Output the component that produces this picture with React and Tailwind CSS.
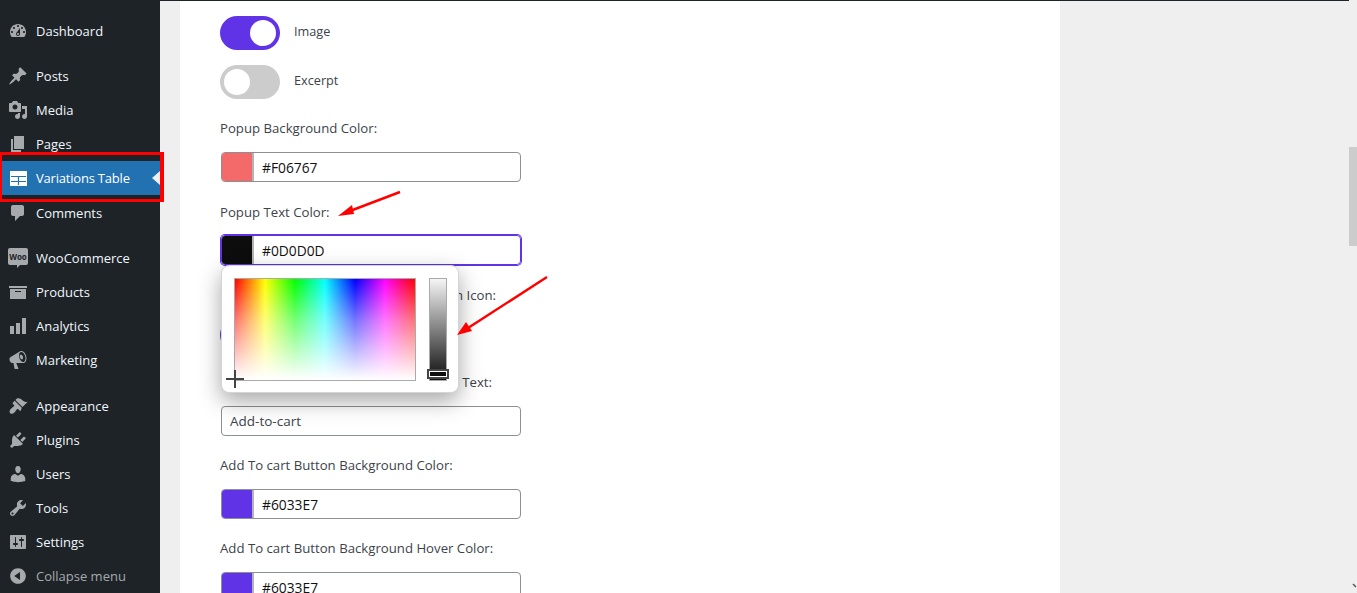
const icons = {
  dashboard:
    "M3.76 16h12.48c1.1-1.37 1.76-3.11 1.76-5 0-4.42-3.58-8-8-8s-8 3.58-8 8c0 1.89.66 3.63 1.76 5zM10 4c.55 0 1 .45 1 1s-.45 1-1 1-1-.45-1-1 .45-1 1-1zM6 6c.55 0 1 .45 1 1s-.45 1-1 1-1-.45-1-1 .45-1 1-1zm8 0c.55 0 1 .45 1 1s-.45 1-1 1-1-.45-1-1 .45-1 1-1zm-5.37 5.55L12 7v6c0 1.1-.9 2-2 2s-2-.9-2-2c0-.57.24-1.08.63-1.45zM4 10c.55 0 1 .45 1 1s-.45 1-1 1-1-.45-1-1 .45-1 1-1zm12 0c.55 0 1 .45 1 1s-.45 1-1 1-1-.45-1-1 .45-1 1-1zm-5 3c0-.55-.45-1-1-1s-1 .45-1 1 .45 1 1 1 1-.45 1-1z",
  post: "M10.44 3.02l1.82-1.82 6.36 6.35-1.83 1.82c-1.05-.68-2.48-.57-3.41.36l-.75.75c-.92.93-1.04 2.35-.35 3.41l-1.83 1.82-2.41-2.41-2.8 2.79c-.42.42-3.38 2.71-3.8 2.29s1.86-3.39 2.28-3.81l2.79-2.79L4.1 9.36l1.83-1.82c1.05.69 2.48.57 3.4-.36l.75-.75c.93-.92 1.05-2.35.36-3.41z",
  media:
    "M13 11V4c0-.55-.45-1-1-1h-1.67L9 1H5L3.67 3H2c-.55 0-1 .45-1 1v7c0 .55.45 1 1 1h10c.55 0 1-.45 1-1zM7 4.5c1.38 0 2.5 1.12 2.5 2.5S8.38 9.5 7 9.5 4.5 8.38 4.5 7 5.62 4.5 7 4.5zM14 6h5v10.5c0 1.38-1.12 2.5-2.5 2.5S14 17.88 14 16.5s1.12-2.5 2.5-2.5c.17 0 .34.02.5.05V9h-3V6zm-4 8.05V13h2v3.5c0 1.38-1.12 2.5-2.5 2.5S7 17.88 7 16.5 8.12 14 9.5 14c.17 0 .34.02.5.05z",
  page: "M6 15V2h10v13H6zm-1 1h8v2H3V5h2v11z",
  comments:
    "M5 2h9c1.1 0 2 .9 2 2v7c0 1.1-.9 2-2 2h-2l-5 5v-5H5c-1.1 0-2-.9-2-2V4c0-1.1.9-2 2-2z",
  archive: "M19 4v2H1V4h18zM2 7h16v10H2V7zm11 3V9H7v1h6z",
  chart: "M18 18V2h-4v16h4zm-6 0V7H8v11h4zm-6 0v-8H2v8h4z",
  megaphone:
    "M18.15 5.94c.46 1.62.38 3.22-.02 4.48-.42 1.28-1.26 2.18-2.3 2.48-.16.06-.26.06-.4.06-.06.02-.12.02-.18.02-.06.02-.14.02-.22.02h-6.8l2.22 5.5c.02.14-.06.26-.14.34-.08.1-.24.16-.34.16H6.95c-.1 0-.26-.06-.34-.16-.08-.08-.16-.2-.14-.34l-1-5.5H4.25l-.02-.02c-.5.06-1.08-.18-1.54-.62s-.88-1.08-1.06-1.88c-.24-.8-.2-1.56-.02-2.2.18-.62.58-1.08 1.06-1.3l.02-.02 9-5.4c.1-.06.18-.1.24-.16.06-.04.14-.08.24-.12.16-.08.28-.12.5-.18 1.04-.3 2.24.1 3.22 1 .98.88 1.8 2.24 2.26 3.86zm-2.58 5.98h-.02c.4-.1.74-.34 1.04-.7.58-.7.86-1.76.86-3.04 0-.64-.1-1.3-.28-1.98-.34-1.36-1.02-2.5-1.78-3.24s-1.68-1.1-2.46-.88c-.82.22-1.4.96-1.7 2-.32 1.04-.28 2.36.06 3.72.38 1.36 1 2.5 1.8 3.24.78.74 1.62 1.1 2.48.88zm-2.54-7.08c.22-.04.42-.02.62.04.38.16.76.48 1.02 1s.42 1.2.42 1.78c0 .3-.04.56-.12.8-.18.48-.44.84-.86.94-.34.1-.8-.06-1.14-.4-.38-.34-.74-.84-.94-1.46-.22-.66-.3-1.3-.24-1.82.08-.44.28-.74.74-.88z",
  appearance:
    "M14.48 11.06L7.41 3.99l1.5-1.5c.5-.56 2.3-.47 3.51.32 1.21.8 1.43 1.28 2.91 2.1 1.18.64 2.45 1.26 4.45.85zm-.71.71L6.7 4.7 4.93 6.47c-.39.39-.39 1.02 0 1.41l1.06 1.06c.39.39.39 1.03 0 1.42-.6.6-1.43 1.11-2.21 1.69-.35.26-.7.53-1.01.84-1.34 1.34-1.6 3.2-.57 4.24 1.04 1.03 2.9.77 4.24-.57.31-.31.58-.66.84-1.01.58-.78 1.09-1.61 1.69-2.21.39-.39 1.02-.39 1.41 0l1.06 1.06c.39.39 1.02.39 1.41 0z",
  plugins:
    "M13.11 4.36L9.87 7.6 8 5.73l3.24-3.24c.35-.34 1.05-.2 1.56.32.52.51.66 1.21.31 1.55zm-8 1.77l.91-1.12 9.01 9.01-1.19.84c-.71.71-2.63 1.16-3.82 1.16H6.14L4.9 17.26c-.59.59-1.54.59-2.12 0-.59-.58-.59-1.53 0-2.12l1.24-1.24v-3.88c0-1.13.4-3.19 1.09-3.89zm7.26 3.97l3.24-3.24c.34-.35 1.04-.21 1.55.31.52.51.66 1.21.31 1.55l-3.24 3.25z",
  users:
    "M10 9.25c-2.27 0-2.73-3.44-2.73-3.44C7 4.02 7.82 2 9.97 2c2.16 0 2.98 2.02 2.71 3.81 0 0-.41 3.44-2.68 3.44zm0 2.57L12.72 10c2.39 0 4.52 2.33 4.52 4.53v2.49s-3.65 1.13-7.24 1.13c-3.65 0-7.24-1.13-7.24-1.13v-2.49c0-2.25 1.94-4.53 4.47-4.53z",
  tools:
    "M16.68 9.77c-1.34 1.34-3.3 1.67-4.95.99l-5.41 6.52c-.99.99-2.59.99-3.58 0s-.99-2.59 0-3.57l6.52-5.42c-.68-1.65-.35-3.61.99-4.95 1.28-1.28 3.12-1.62 4.72-1.06l-2.89 2.89 2.82 2.82 2.86-2.87c.53 1.58.18 3.39-1.08 4.65zM3.81 16.21c.4.39 1.04.39 1.43 0 .4-.4.4-1.04 0-1.43-.39-.4-1.03-.4-1.43 0-.39.39-.39 1.03 0 1.43z",
  settings:
    "M18 16V4c0-.55-.45-1-1-1H3c-.55 0-1 .45-1 1v12c0 .55.45 1 1 1h14c.55 0 1-.45 1-1zM8 11h1c.55 0 1 .45 1 1s-.45 1-1 1H8v1.5c0 .28-.22.5-.5.5s-.5-.22-.5-.5V13H6c-.55 0-1-.45-1-1s.45-1 1-1h1V5.5c0-.28.22-.5.5-.5s.5.22.5.5V11zm5-2h-1c-.55 0-1-.45-1-1s.45-1 1-1h1V5.5c0-.28.22-.5.5-.5s.5.22.5.5V7h1c.55 0 1 .45 1 1s-.45 1-1 1h-1v5.5c0 .28-.22.5-.5.5s-.5-.22-.5-.5V9z",
  collapse:
    "M10 2.16c4.33 0 7.84 3.51 7.84 7.84s-3.51 7.84-7.84 7.84S2.16 14.33 2.16 10 5.71 2.16 10 2.16zm2 11.72V6.12L6.18 9.97z",
};

function Dashicon({ name }) {
  return (
    <svg viewBox="0 0 20 20" className="h-[20px] w-[20px] fill-[#a7aaad]">
      <path d={icons[name]} />
    </svg>
  );
}

function WooIcon() {
  return (
    <span className="relative mb-[3px] flex h-[17px] w-[20px] items-center justify-center rounded-[2px] bg-[#a7aaad]">
      <span className="text-[8px] leading-none font-bold text-[#1d2327]">Woo</span>
      <span className="absolute top-[16px] left-[9px] h-0 w-0 border-t-[4px] border-r-[4px] border-t-[#a7aaad] border-r-transparent"></span>
    </span>
  );
}

function TableIcon() {
  return (
    <svg viewBox="0 0 17 15" className="h-[15px] w-[17px]">
      <rect width="17" height="15" fill="#ffffff" />
      <path d="M1 5.5h15M1 10.5h15M8.5 5.5v8.5" stroke="#2271b1" strokeWidth="1.2" fill="none" />
    </svg>
  );
}

function MenuItem({ icon, label, className = "" }) {
  return (
    <div className={`flex h-[34px] items-center ${className}`}>
      <span className="flex w-[36px] shrink-0 justify-center">
        {icon === "woo" ? <WooIcon /> : <Dashicon name={icon} />}
      </span>
      <span className="pt-[2px] text-[13px] text-[#f0f6fc]">{label}</span>
    </div>
  );
}

function Sidebar() {
  return (
    <aside className="h-full w-[160px] shrink-0 bg-[#1d2327] pt-[14px]">
      <MenuItem icon="dashboard" label="Dashboard" />
      <MenuItem icon="post" label="Posts" className="mt-[11px]" />
      <MenuItem icon="media" label="Media" />
      <MenuItem icon="page" label="Pages" />
      <div className="relative flex h-[34px] items-center bg-[#2271b1]">
        <span className="flex w-[36px] shrink-0 justify-center">
          <TableIcon />
        </span>
        <span className="pt-[2px] text-[13px] tracking-[-0.2px] text-white">Variations Table</span>
        <span className="absolute top-[10px] right-0 h-0 w-0 border-y-[7px] border-r-[8px] border-y-transparent border-r-[#f0f0f0]"></span>
      </div>
      <MenuItem icon="comments" label="Comments" className="mt-[1px]" />
      <MenuItem icon="woo" label="WooCommerce" className="mt-[11px]" />
      <MenuItem icon="archive" label="Products" />
      <MenuItem icon="chart" label="Analytics" />
      <MenuItem icon="megaphone" label="Marketing" />
      <MenuItem icon="appearance" label="Appearance" className="mt-[12px]" />
      <MenuItem icon="plugins" label="Plugins" />
      <MenuItem icon="users" label="Users" />
      <MenuItem icon="tools" label="Tools" />
      <MenuItem icon="settings" label="Settings" />
      <div className="flex h-[34px] items-center">
        <span className="flex w-[36px] shrink-0 justify-center">
          <Dashicon name="collapse" />
        </span>
        <span className="pt-[2px] text-[13px] text-[#a7aaad]">Collapse menu</span>
      </div>
    </aside>
  );
}

function Toggle({ on, label, className = "" }) {
  return (
    <div className={`flex h-[34px] items-center gap-[14px] ${className}`}>
      <span
        className={`flex h-[34px] w-[60px] items-center rounded-full px-[4px] ${
          on ? "justify-end bg-[#6033e7]" : "justify-start bg-[#cccccc]"
        }`}
      >
        <span className="h-[26px] w-[26px] rounded-full bg-white"></span>
      </span>
      <span className="pb-[2px] text-[12.7px] text-[#3c434a]">{label}</span>
    </div>
  );
}

function FieldLabel({ children, className = "" }) {
  return <div className={`h-[20px] text-[13.2px] leading-[20px] text-[#3c434a] ${className}`}>{children}</div>;
}

function ColorField({ color, value, focused }) {
  return (
    <div
      className={`ml-[1px] flex h-[30px] w-[300px] overflow-hidden rounded-[4px] border ${
        focused ? "border-[#6033e7] shadow-[0_0_0_1px_#6033e7]" : "border-[#8c8f94]"
      }`}
    >
      <span className={`h-full w-[30px] ${color}`}></span>
      <span className="w-[2px] bg-[#b4b4b4]"></span>
      <span className="pt-[1px] pl-[8px] text-[13.8px] leading-[28px] text-[#111111]">{value}</span>
    </div>
  );
}

function ColorPicker() {
  return (
    <div className="absolute top-[264px] left-[41px] z-10 flex h-[128px] w-[238px] gap-[13px] rounded-[8px] border border-[#d4d4d4] bg-white pt-[12px] pl-[12px] shadow-[0_8px_22px_rgba(0,0,0,0.35)]">
      <div className="relative h-[103px] w-[182px] border border-[#aaaaaa] bg-[linear-gradient(to_bottom,transparent,rgba(255,255,255,0.45)_40%,white),linear-gradient(to_right,#ff0000,#ffff00,#00ff00,#00ffff,#0000ff,#ff00ff,#ff0000)]">
        <span className="absolute top-[99px] left-[-9px] h-[2px] w-[18px] bg-[#444444]"></span>
        <span className="absolute top-[91px] left-[-1px] h-[18px] w-[2px] bg-[#444444]"></span>
      </div>
      <div className="relative h-[103px] w-[18px] border border-[#aaaaaa] bg-[linear-gradient(to_bottom,#f5f5f5,#0d0d0d)]">
        <span className="absolute top-[90px] left-[-3px] flex h-[10px] w-[22px] items-center justify-center border-2 border-[#444444] bg-white">
          <span className="h-[4px] w-[16px] bg-[#0d0d0d]"></span>
        </span>
      </div>
    </div>
  );
}

function Annotations() {
  return (
    <>
      <div className="pointer-events-none absolute top-[152px] left-0 z-20 h-[50px] w-[164px] border-[3px] border-r-[4px] border-l-2 border-[#ff0000]"></div>
      <svg className="pointer-events-none absolute top-0 left-0 z-20 h-[593px] w-[1357px]" viewBox="0 0 1357 593">
        <line x1="400" y1="192" x2="350" y2="211" stroke="#ff0000" strokeWidth="2.5" />
        <polygon points="338,216 352,205 354,214" fill="#ff0000" />
        <line x1="547" y1="277" x2="468" y2="328" stroke="#ff0000" strokeWidth="2.5" />
        <polygon points="457,335 466,322 472,331" fill="#ff0000" />
      </svg>
    </>
  );
}

export default function App() {
  return (
    <div
      className="relative flex h-[593px] w-full overflow-hidden bg-[#efefef]"
      style={{ fontFamily: '"Open Sans", "Noto Sans", sans-serif' }}
    >
      <Sidebar />
      <main className="flex-1 border-t border-[#1d2327] pl-[20px]">
        <div className="relative h-full w-[880px] bg-white pt-[15px] pl-[40px]">
          <Toggle on label="Image" />
          <Toggle label="Excerpt" className="mt-[15px]" />

          <FieldLabel className="mt-[19px] mb-[14px]">Popup Background Color:</FieldLabel>
          <ColorField color="bg-[#f46a6a]" value="#F06767" />

          <FieldLabel className="mt-[20px] mb-[13px]">Popup Text Color:</FieldLabel>
          <ColorField color="bg-[#0d0d0d]" value="#0D0D0D" focused />

          <FieldLabel className="mt-[20px] mb-[13px] w-[276px] text-right">Add To cart Button Icon:</FieldLabel>
          <Toggle on label="" />

          <FieldLabel className="mt-[20px] mb-[14px] w-[272px] text-right">Add To cart Button Text:</FieldLabel>
          <div className="ml-[1px] h-[30px] w-[300px] rounded-[4px] border border-[#8c8f94] pl-[8px] text-[13.5px] leading-[28px] text-[#3c434a]">
            Add-to-cart
          </div>

          <FieldLabel className="mt-[19px] mb-[14px]">Add To cart Button Background Color:</FieldLabel>
          <ColorField color="bg-[#6033e7]" value="#6033E7" />

          <FieldLabel className="mt-[19px] mb-[14px]">Add To cart Button Background Hover Color:</FieldLabel>
          <ColorField color="bg-[#6033e7]" value="#6033E7" />

          <ColorPicker />
        </div>
      </main>
      <div className="relative w-[8px] shrink-0 bg-[#efefef]">
        <div className="mt-[147px] h-[99px] w-[8px] bg-[#cccccc]"></div>
        <svg viewBox="0 0 8 8" className="absolute right-0 bottom-[3px] h-[8px] w-[8px] fill-none stroke-[#555555] stroke-[1.5]">
          <path d="M4 2l3 3" />
        </svg>
      </div>
      <Annotations />
    </div>
  );
}
